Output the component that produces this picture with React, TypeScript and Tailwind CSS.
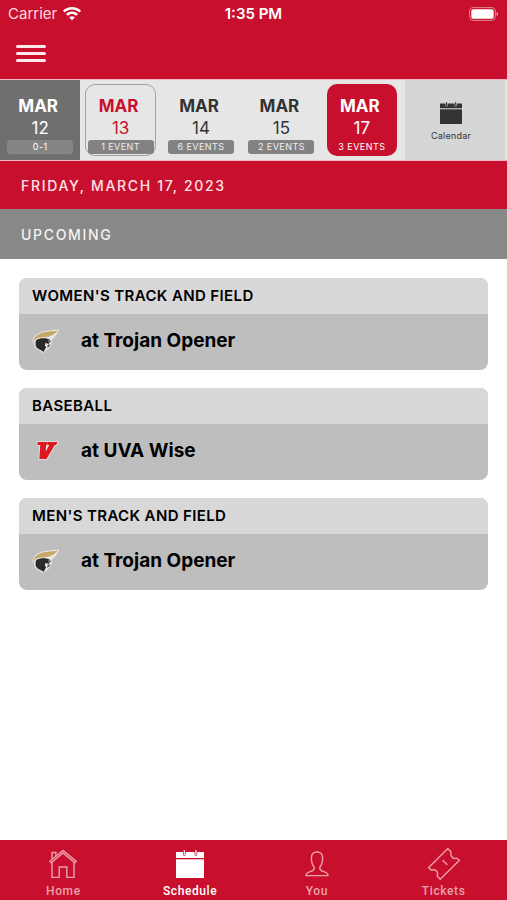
import React from "react";
import clsx from "clsx";

interface DayData {
  month: string;
  day: number;
  label: string;
  state?: "past" | "today" | "selected";
}

interface EventData {
  id: number;
  sport: string;
  title: string;
  logo: "trojan" | "wise";
}

const days: DayData[] = [
  { month: "MAR", day: 12, label: "0-1", state: "past" },
  { month: "MAR", day: 13, label: "1 EVENT", state: "today" },
  { month: "MAR", day: 14, label: "6 EVENTS" },
  { month: "MAR", day: 15, label: "2 EVENTS" },
  { month: "MAR", day: 17, label: "3 EVENTS", state: "selected" },
];

const events: EventData[] = [
  { id: 1, sport: "WOMEN'S TRACK AND FIELD", title: "at Trojan Opener", logo: "trojan" },
  { id: 2, sport: "BASEBALL", title: "at UVA Wise", logo: "wise" },
  { id: 3, sport: "MEN'S TRACK AND FIELD", title: "at Trojan Opener", logo: "trojan" },
];

function WifiIcon() {
  return (
    <svg width="18" height="14" viewBox="0 0 18 14" fill="white" aria-hidden="true">
      <path d="M9 0C5.600 0 2.500 1.300.2 3.400c-.2.2-.2.5 0 .7l1.100 1.100c.2.2.5.2.7 0C3.900 3.500 6.300 2.500 9 2.500s5.100 1 7 2.700c.2.2.5.2.7 0l1.100-1.100c.2-.2.2-.5 0-.7C15.500 1.300 12.400 0 9 0z" />
      <path d="M9 4.600c-2.100 0-4.100.8-5.600 2.200-.2.2-.2.5 0 .7l1.100 1.100c.2.2.5.2.7 0C6.200 7.700 7.500 7.100 9 7.100s2.800.6 3.800 1.500c.2.2.5.2.7 0l1.100-1.100c.2-.2.2-.5 0-.7C13.100 5.400 11.100 4.600 9 4.600z" />
      <path d="M9 9.200c-.9 0-1.700.3-2.400.9-.2.2-.2.5 0 .7L8.700 13c.2.2.5.2.7 0l2.100-2.200c.2-.2.2-.5 0-.7-.7-.6-1.600-.9-2.500-.9z" />
    </svg>
  );
}

function BatteryIcon() {
  return (
    <svg width="30" height="14" viewBox="0 0 30 14" aria-hidden="true">
      <rect x=".6" y=".6" width="25.800" height="12.800" rx="4" fill="none" stroke="white" strokeOpacity=".5" />
      <rect x="2.300" y="2.300" width="22.400" height="9.400" rx="2" fill="white" />
      <path d="M27.600 4.900c1.900.6 1.900 3.600 0 4.200z" fill="white" fillOpacity=".6" />
    </svg>
  );
}

function CalendarIcon({ className }: { className?: string }) {
  return (
    <svg viewBox="0 0 28 28" fill="currentColor" className={className} aria-hidden="true">
      <path d="M0 2h7v2.500a1.300 1.300 0 0 0 2.600 0V2h9v2.500a1.300 1.300 0 0 0 2.600 0V2H28v6H0z" />
      <path d="M0 9.300h28V28H0z" />
      <path d="M7.700 0h1.200v5H7.700zM19.300 0h1.200v5h-1.200z" />
    </svg>
  );
}

function HomeIcon() {
  return (
    <svg width="28" height="30" viewBox="0 0 28 30" fill="none" stroke="currentColor" strokeWidth="1.400" aria-hidden="true">
      <path d="M.9 12.200 14 1.400l13.100 10.800-1.300 1.500L14 4 2.200 13.700z" />
      <path d="M3 10.400V3.500h3.900v3.700" />
      <path d="M3 13.200V28.400h7.200V18h7.600v10.400H25V13.200" />
    </svg>
  );
}

function PersonIcon() {
  return (
    <svg width="24" height="26" viewBox="0 0 24 26" fill="none" stroke="currentColor" strokeWidth="1.400" strokeLinejoin="round" aria-hidden="true">
      <path d="M12 1C8 1 6.400 3.400 6.400 7c0 3.600 1 7 2.700 9 .5 2.300-.3 3.300-2.100 4C3.900 21.100 1.200 21.500.9 24.600h22.200c-.3-3.100-3-3.500-6.100-4.600-1.800-.7-2.600-1.700-2.100-4 1.700-2 2.700-5.400 2.700-9 0-3.600-1.600-6-5.600-6z" />
    </svg>
  );
}

function TicketIcon() {
  return (
    <svg width="34" height="34" viewBox="0 0 34 34" fill="none" stroke="currentColor" strokeWidth="1.400" strokeLinejoin="round" aria-hidden="true">
      <path d="M20.800 1.500 24 5c-1 3.400 1.700 7.800 5.700 6.200l2.800 2L13.200 32.300l-3-3.300c1.600-4-1.700-7.200-5.700-5.800l-3-2.500z" />
      <path d="m15.500 13.200 4.800 4.600" />
    </svg>
  );
}

function TrojanLogo() {
  return (
    <svg width="28" height="24" viewBox="0 0 28 24" aria-label="Trojans logo">
      <path d="M27.300.6C20 1.600 10 1.400 4.600 5.400.8 8.200.1 11.600.5 14.200c.8-2.200 1-2.500 2-3.200-1 3-1 5.500.7 7.700 1.800 2.300 5.600 3.600 7.600 5.300 3.600-2.600 6-4 7.600-6.800 1.500-2.500 1.500-4.500 1.600-6.800C23.200 8 25.500 4.500 27.300.6z" fill="#e9e7e3" />
      <path d="M25.600 1.600C19 2.800 10.400 2.400 5.400 6 2.700 8 1.400 10 1.200 12.200 3.600 9.400 7 8 11.500 8.200c4.800.2 10.500-1.500 14.100-6.600z" fill="#c6a766" />
      <path d="M4.300 11c3.200-2.300 10.700-2.700 14.500.2-1.200-.2-2.300.1-3 .9l2 1.500-1.500 1.500-2.700-1.400-.8 3.200 1.500 1-2.800 5c-2.600-2-5.800-2.600-7.200-4.800-1.200-2-1-4.900 0-7.100z" fill="#292a2c" />
      <path d="m15.500 16 2.700-.9-.8 2.400-2.200 1.300zM15.200 11.600l3.700-.2-.6 2z" fill="#55565a" />
    </svg>
  );
}

function WiseLogo() {
  return (
    <svg width="28" height="24" viewBox="0 0 28 24" aria-label="UVA Wise logo">
      <path d="M5.500 3h10v3H14l-.2 6.500L17.200 6h-1.400V3H25.500l-1.300 3h-1.400L14.500 20H7.300L8.200 6H5.500z" fill="#dc1920" stroke="#e8e8e8" strokeWidth="1.600" paintOrder="stroke" />
    </svg>
  );
}

function DayCell({ item }: { item: DayData }) {
  const { state } = item;
  return (
    <li className={clsx("flex-1 px-[5px] py-1", state === "past" && "bg-[#6f6f6f]")}>
      <button
        type="button"
        className={clsx(
          "flex w-full h-[72px] flex-col items-center rounded-[10px] border pt-[11px]",
          state === "today" ? "border-[#a3a3a3] text-[#c8102e]" : "border-transparent",
          state === "past" && "text-white",
          state === "selected" && "bg-[#c8102e] text-white",
          !state && "text-[#333333]"
        )}
      >
        <span className="pr-1 text-[17px] leading-5 font-bold">{item.month}</span>
        <span className="text-[17px] leading-6">{item.day}</span>
        <span
          className={clsx(
            "w-[66px] rounded-[3px] text-[9px] leading-[14px] tracking-wider",
            state === "past" && "bg-[#858585] text-white",
            state === "selected" && "text-white",
            (!state || state === "today") && "bg-[#828282] text-[#eeeeee]"
          )}
        >
          {item.label}
        </span>
      </button>
    </li>
  );
}

const tabs = [
  { name: "Home", icon: <HomeIcon /> },
  { name: "Schedule", icon: <CalendarIcon className="w-7 h-7" /> },
  { name: "You", icon: <PersonIcon /> },
  { name: "Tickets", icon: <TicketIcon /> },
];

export default function App() {
  return (
    <div className="min-h-screen flex flex-col bg-white font-['Inter',sans-serif]">
      <header className="bg-[#c8102e] text-white">
        <div className="grid grid-cols-3 items-center h-7 px-2">
          <div className="flex items-center gap-1.5 text-[15px]">
            <span className="text-[#ffd9df]">Carrier</span>
            <WifiIcon />
          </div>
          <span className="text-center text-[15px] font-semibold">1:35 PM</span>
          <div className="flex justify-end">
            <BatteryIcon />
          </div>
        </div>
        <div className="flex items-center h-[51px] px-4">
          <button type="button" aria-label="Menu" className="flex flex-col gap-1 py-2">
            <span className="block w-[30px] h-[3px] rounded-sm bg-[#ffe8ec]" />
            <span className="block w-[30px] h-[3px] rounded-sm bg-[#ffe8ec]" />
            <span className="block w-[30px] h-[3px] rounded-sm bg-[#ffe8ec]" />
          </button>
        </div>
      </header>

      <div className="flex bg-[#e6e6e6] border-y border-[#f0b6bf] pr-0.5">
        <ul className="flex flex-1">
          {days.map((item) => (
            <DayCell key={item.day} item={item} />
          ))}
        </ul>
        <button
          type="button"
          className="ml-[3px] w-[100px] flex flex-col items-center justify-center gap-1.5 pt-1 pr-2 bg-[#d5d6d6] text-[#333333]"
        >
          <CalendarIcon className="w-[22px] h-[22px]" />
          <span className="text-[9px] leading-3 tracking-wide">Calendar</span>
        </button>
      </div>

      <h1 className="h-12 pt-0.5 pl-[21px] flex items-center bg-[#c8102e] text-[#ffe3e7] text-sm font-medium tracking-[0.12em]">
        FRIDAY, MARCH 17, 2023
      </h1>
      <h2 className="h-[50px] pt-0.5 pl-[21px] flex items-center bg-[#888888] text-[#f2f2f2] text-sm font-medium tracking-[0.12em]">
        UPCOMING
      </h2>

      <main className="flex-1 flex flex-col gap-[18px] px-[19px] py-[19px]">
        {events.map((event) => (
          <section key={event.id} className="rounded-lg overflow-hidden bg-[#bebebe] text-black">
            <h3 className="h-9 pl-[13px] flex items-center bg-[#d8d8d8] text-[15px] font-semibold tracking-wide">
              {event.sport}
            </h3>
            <div className="h-14 pl-[13px] pb-0.5 flex items-center gap-[21px]">
              {event.logo === "trojan" ? <TrojanLogo /> : <WiseLogo />}
              <p className="text-[19px] font-bold">{event.title}</p>
            </div>
          </section>
        ))}
      </main>

      <nav className="grid grid-cols-4 h-[60px] bg-[#c8102e] font-['Roboto',sans-serif]">
        {tabs.map((tab) => (
          <a
            key={tab.name}
            href="#"
            className={clsx(
              "flex flex-col items-center pt-1.5",
              tab.name === "Schedule" ? "text-white" : "text-[#eba0ab]"
            )}
          >
            <span className="h-9 flex items-center justify-center">{tab.icon}</span>
            <span className="text-xs leading-[18px] font-medium tracking-wider">{tab.name}</span>
          </a>
        ))}
      </nav>
    </div>
  );
}
